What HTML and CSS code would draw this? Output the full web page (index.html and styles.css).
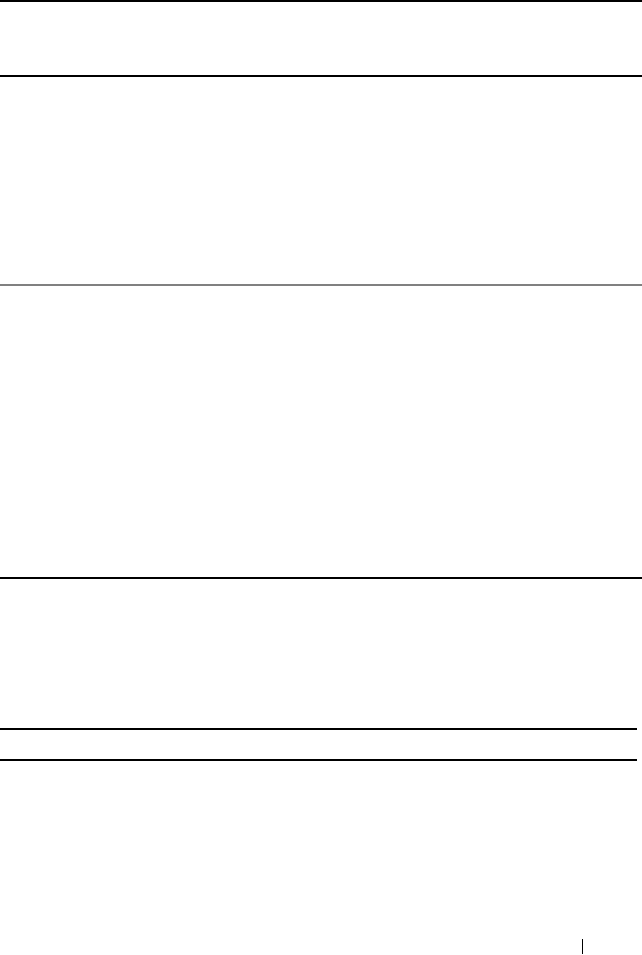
FILE: index.html
```html
<!DOCTYPE html>
<html>
<head>
<meta charset="utf-8">
<link rel="stylesheet" href="styles.css">
</head>
<body>
<div class="page">
  <div class="rule rule-top"></div>
  <div class="block b1"></div>
  <div class="rule"></div>
  <div class="block b2"></div>
  <div class="rule rule-gray"></div>
  <div class="block b3"></div>
  <div class="rule"></div>
  <div class="block b4"></div>
  <div class="table">
    <div class="rule rule-short"></div>
    <div class="block b5"></div>
    <div class="rule rule-short"></div>
  </div>
  <div class="footer">
    <span class="footer-bar"></span>
  </div>
</div>
</body>
</html>
```

FILE: styles.css
```css
html, body {
  margin: 0;
  padding: 0;
  background: #ffffff;
  font-family: "Liberation Sans", Arial, sans-serif;
}
.page {
  width: 642px;
  height: 955px;
  display: flex;
  flex-direction: column;
  overflow: hidden;
}
.rule {
  height: 2px;
  background: #000000;
  flex: none;
}
.rule-gray {
  background: #808080;
}
.rule-short {
  width: 637px;
}
.block {
  flex: none;
}
.b1 { height: 73px; }
.b2 { height: 207px; }
.b3 { height: 291px; }
.b4 { height: 149px; }
.b5 { height: 29px; }
.table {
  display: flex;
  flex-direction: column;
}
.footer {
  flex: 1;
  display: flex;
  align-items: flex-end;
  justify-content: flex-end;
  padding-right: 59px;
  padding-bottom: 1px;
}
.footer-bar {
  display: block;
  width: 1px;
  height: 15px;
  background: #000000;
}
```
